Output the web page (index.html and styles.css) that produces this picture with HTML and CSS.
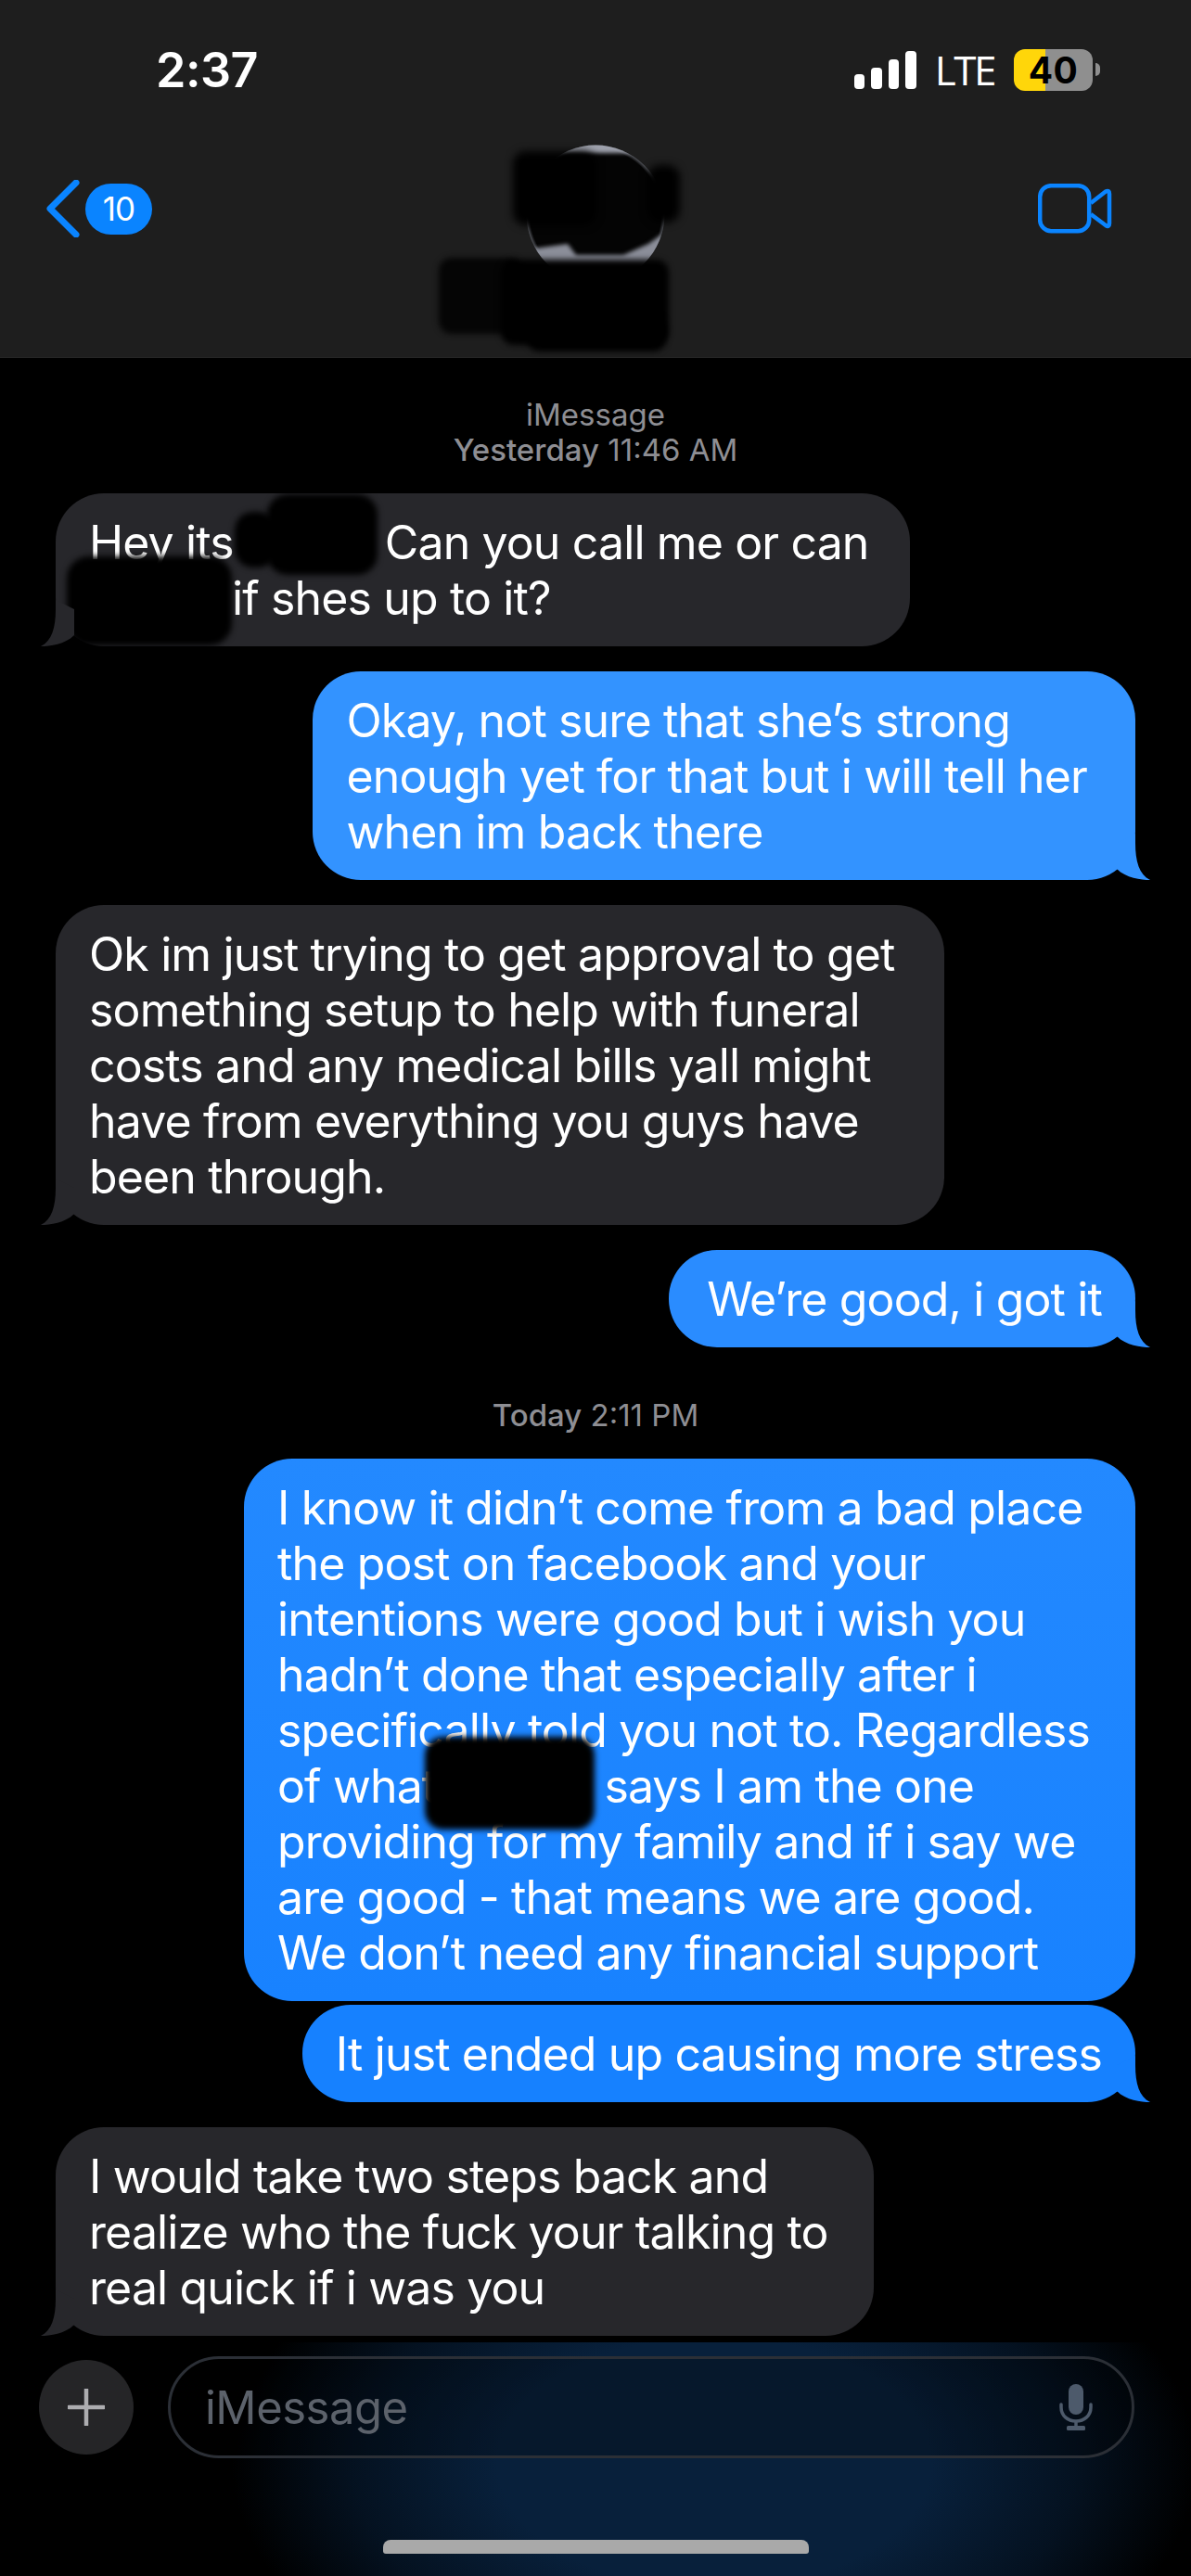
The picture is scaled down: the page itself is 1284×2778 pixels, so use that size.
FILE: index.html
```html
<!DOCTYPE html>
<html lang="en">
<head>
<meta charset="utf-8">
<title>Messages</title>
<link rel="stylesheet" href="styles.css">
</head>
<body>
<div class="phone">
  <header class="header">
    <div class="status">
      <span class="clock">2:37</span>
      <div class="status-right">
        <div class="signal"><i class="s1"></i><i class="s2"></i><i class="s3"></i><i class="s4"></i></div>
        <span class="lte">LTE</span>
        <div class="battery"><span class="battery-text">40</span></div>
        <span class="nub"></span>
      </div>
    </div>
    <div class="nav">
      <div class="back">
        <svg class="chevron" width="36" height="62" viewBox="0 0 36 62"><path d="M32 3 L4 31 L32 59" fill="none" stroke="#0a84ff" stroke-width="7" stroke-linecap="round" stroke-linejoin="round"/></svg>
        <span class="badge">10</span>
      </div>
      <svg class="avatar" width="150" height="150" viewBox="0 0 150 150">
        <defs>
          <clipPath id="disc"><circle cx="75" cy="75" r="74.5"/></clipPath>
          <radialGradient id="rim"><stop offset="0.95" stop-color="#040404"/><stop offset="1" stop-color="#505258"/></radialGradient>
        </defs>
        <circle cx="75" cy="75" r="74.5" fill="url(#rim)"/>
        <g clip-path="url(#disc)">
          <rect class="soft" x="0" y="-5" width="150" height="14" fill="#9da0ab"/>
          <path class="soft" d="M0 116 L9 112 L45 107 L54 119 L105 119 L132 107 L146 97 L150 150 L0 150 Z" fill="#8b8e99"/>
        </g>
      </svg>
      <svg class="video" width="80" height="54" viewBox="0 0 80 54"><rect x="2.2" y="2.2" width="53" height="49" rx="12" fill="none" stroke="#0a84ff" stroke-width="4.5"/><path d="M57 21 L73 8.5 Q77 6.5 77 11 L77 43 Q77 47.5 73 45 L57 33" fill="none" stroke="#0a84ff" stroke-width="4.5" stroke-linejoin="round"/></svg>
    </div>
    <span class="blob hb1"></span>
    <span class="blob hb2"></span>
    <span class="blob hb3"></span>
    <span class="blob hb4"></span>
    <span class="blob hb5"></span>
  </header>

  <main class="thread">
    <div class="stamp stamp-first">iMessage<br><b>Yesterday</b> 11:46 AM</div>

    <div class="bubble in multi pad-less">
      <span class="gap-a">Hey its</span><span class="after-a">Can you call me or can</span><br>
      <span class="gap-b">if shes up to it?</span>
      <span class="blob rb1"></span>
      <span class="blob rb2"></span>
      <span class="blob rb3"></span>
      <svg class="tail tail-in" width="50" height="50" viewBox="0 0 50 50"><path d="M34 0 L34 10 C34 30 38 44 50 50 C40 50 24 48 14 38 L14 10 Z"/></svg>
    </div>

    <div class="bubble out blue-1 multi pad-more">
      Okay, not sure that she’s strong<br>enough yet for that but i will tell her<br>when im back there
      <svg class="tail tail-out" width="50" height="50" viewBox="0 0 50 50"><path d="M34 0 L34 10 C34 30 38 44 50 50 C40 50 24 48 14 38 L14 10 Z"/></svg>
    </div>

    <div class="bubble in multi pad-most">
      Ok im just trying to get approval to get<br>something setup to help with funeral<br>costs and any medical bills yall might<br>have from everything you guys have<br>been through.
      <svg class="tail tail-in" width="50" height="50" viewBox="0 0 50 50"><path d="M34 0 L34 10 C34 30 38 44 50 50 C40 50 24 48 14 38 L14 10 Z"/></svg>
    </div>

    <div class="bubble out blue-2">
      We’re good, i got it
      <svg class="tail tail-out" width="50" height="50" viewBox="0 0 50 50"><path d="M34 0 L34 10 C34 30 38 44 50 50 C40 50 24 48 14 38 L14 10 Z"/></svg>
    </div>

    <div class="stamp stamp-today"><b>Today</b> 2:11 PM</div>

    <div class="bubble out blue-3 tight multi">
      I know it didn’t come from a bad place<br>the post on facebook and your<br>intentions were good but i wish you<br>hadn’t done that especially after i<br>specifically told you not to. Regardless<br><span class="gap-c">of what</span>says I am the one<br>providing for my family and if i say we<br>are good - that means we are good.<br>We don’t need any financial support
      <span class="blob rb4"></span>
    </div>

    <div class="bubble out blue-4">
      It just ended up causing more stress
      <svg class="tail tail-out" width="50" height="50" viewBox="0 0 50 50"><path d="M34 0 L34 10 C34 30 38 44 50 50 C40 50 24 48 14 38 L14 10 Z"/></svg>
    </div>

    <div class="bubble in multi">
      I would take two steps back and<br>realize who the fuck your talking to<br>real quick if i was you
      <svg class="tail tail-in" width="50" height="50" viewBox="0 0 50 50"><path d="M34 0 L34 10 C34 30 38 44 50 50 C40 50 24 48 14 38 L14 10 Z"/></svg>
    </div>
  </main>

  <footer class="composer">
    <div class="input-row">
      <div class="plus"><svg width="40" height="40" viewBox="0 0 40 40"><path d="M20 1 V39 M1 20 H39" stroke="#adadb0" stroke-width="4.5" stroke-linecap="round"/></svg></div>
      <div class="field">
        <span class="placeholder">iMessage</span>
        <svg class="mic" width="38" height="52" viewBox="0 0 38 52"><rect x="11" y="1" width="16" height="33" rx="8" fill="#4d5a6b"/><path d="M3 23 V26 C3 35 10 41 19 41 C28 41 35 35 35 26 V23" fill="none" stroke="#4d5a6b" stroke-width="3.5" stroke-linecap="round"/><path d="M19 41 V48" stroke="#4d5a6b" stroke-width="3.5"/><rect x="9" y="46" width="20" height="5" rx="1.5" fill="#4d5a6b"/></svg>
      </div>
    </div>
    <div class="home-bar"></div>
  </footer>
</div>
</body>
</html>
```
FILE: styles.css
```css
* { box-sizing: border-box; }
html, body { margin: 0; padding: 0; background: #000; }
.phone {
  width: 1284px;
  height: 2778px;
  overflow: hidden;
  display: flex;
  flex-direction: column;
  background: #000;
  font-family: Inter, "Liberation Sans", sans-serif;
  color: #fff;
}

/* header */
.header {
  position: relative;
  height: 386px;
  flex: none;
  background: #1e1e1e;
  border-bottom: 1px solid #262626;
}
.status {
  display: flex;
  align-items: center;
  height: 100px;
  padding: 50px 98px 0 168px;
}
.clock { font-size: 52px; font-weight: 600; letter-spacing: -0.5px; }
.status-right { margin-left: auto; display: flex; align-items: center; }
.signal { display: flex; align-items: flex-end; gap: 7px; height: 41px; margin-right: 20px; }
.signal i { display: block; width: 11.5px; background: #fff; border-radius: 4px; }
.s1 { height: 16px; }
.s2 { height: 23px; }
.s3 { height: 32px; }
.s4 { height: 41px; }
.lte { font-family: "Open Sans", sans-serif; font-size: 44px; line-height: 44px; margin-right: 21px; letter-spacing: -2.5px; }
.battery {
  width: 85px;
  height: 45px;
  border-radius: 12px;
  background: linear-gradient(90deg, #ffd60a 0 34px, #8f8f8f 34px);
  display: flex;
  align-items: center;
  justify-content: center;
}
.battery-text { font-size: 39px; font-weight: 700; color: #000; letter-spacing: 0.5px; }
.nub { width: 5px; height: 14px; margin-left: 3px; background: #8f8f8f; border-radius: 0 7px 7px 0; }

.nav {
  display: grid;
  grid-template-columns: 1fr auto 1fr;
  align-items: center;
  height: 190px;
  padding: 0 50px;
  margin-top: 30px;
}
.back { display: flex; align-items: center; gap: 6px; }
.badge {
  width: 72px;
  height: 55px;
  border-radius: 28px;
  background: #0a84ff;
  display: flex;
  align-items: center;
  justify-content: center;
  font-size: 35px;
  letter-spacing: -1px;
}
.avatar { margin-top: 11px; }
.soft { filter: blur(2px); }
.video { justify-self: end; margin-right: 35px; }

.blob { position: absolute; background: #000; filter: blur(3px); border-radius: 14px; }
.hb1 { left: 553px; top: 163px; width: 90px; height: 80px; filter: blur(4px); }
.hb2 { left: 698px; top: 178px; width: 35px; height: 62px; filter: blur(4px); }
.hb3 { left: 473px; top: 278px; width: 90px; height: 82px; background: #050505; }
.hb4 { left: 540px; top: 280px; width: 181px; height: 92px; }
.hb5 { left: 568px; top: 340px; width: 150px; height: 39px; }

/* thread */
.thread {
  flex: 1;
  min-height: 0;
  display: flex;
  flex-direction: column;
  align-items: flex-start;
  padding: 42px 60px 0;
  font-size: 50px;
  line-height: 60px;
}
.stamp {
  align-self: center;
  text-align: center;
  color: #8e8e93;
  font-size: 33px;
  line-height: 38px;
}
.stamp b { font-weight: 500; }
.stamp-first { margin-bottom: 28px; }
.stamp-today { margin: 27px 0 28px; }

.bubble {
  position: relative;
  padding: 22.5px 36px;
  border-radius: 52px;
  margin-bottom: 27px;
  white-space: nowrap;
  letter-spacing: -0.87px;
}
.bubble.multi { padding-right: 49px; }
.bubble.pad-less { padding-right: 44px; }
.bubble.pad-more { padding-right: 52px; }
.bubble.pad-most { padding-right: 54px; }
.bubble.tight { margin-bottom: 4px; }
.bubble.in { background: #27272b; }
.bubble.out { align-self: flex-end; }
.blue-1 { background: #3393ff; fill: #3393ff; }
.bubble.blue-2 { background: #2a8cff; fill: #2a8cff; padding-left: 41px; }
.blue-3 { background: linear-gradient(#2389ff, #1882ff); }
.blue-4 { background: #1681ff; fill: #1681ff; }

.tail { position: absolute; bottom: 0; }
.tail-out { right: -16px; }
.tail-in { left: -16px; transform: scaleX(-1); fill: #27272b; }

.gap-a { margin-right: 163px; }
.gap-b { margin-left: 154px; }
.gap-c { margin-right: 181px; }
.rb1 { left: 228px; top: 1px; width: 119px; height: 87px; border-radius: 22px; }
.rb2 { left: 193px; top: 20px; width: 45px; height: 60px; border-radius: 20px; }
.rb3 { left: 12px; top: 68px; width: 178px; height: 96px; border-radius: 24px; }
.rb4 { left: 195px; top: 300px; width: 183px; height: 100px; border-radius: 20px; }

/* composer */
.composer {
  position: relative;
  height: 252px;
  flex: none;
  background:
    radial-gradient(ellipse 520px 300px at 770px 130px, #08203b 0 45%, rgba(8, 32, 59, 0.55) 75%, rgba(8, 32, 59, 0) 100%),
    #000;
}
.input-row { display: flex; align-items: center; gap: 37px; padding: 15px 61px 0 42px; }
.plus {
  width: 102px;
  height: 102px;
  border-radius: 50%;
  background: #252527;
  display: flex;
  align-items: center;
  justify-content: center;
  flex: none;
}
.field {
  flex: 1;
  height: 110px;
  border: 3px solid #2b2f36;
  border-radius: 55px;
  display: flex;
  align-items: center;
  justify-content: space-between;
  padding: 0 41px 0 37px;
  background: rgba(0, 0, 0, 0.25);
}
.placeholder { font-size: 49px; letter-spacing: -0.5px; color: #5c626b; }
.mic { flex: none; }
.home-bar {
  position: absolute;
  left: 413px;
  top: 213px;
  width: 459px;
  height: 15px;
  background: #a9a9a9;
  border-radius: 8px 8px 3px 3px;
}
```
